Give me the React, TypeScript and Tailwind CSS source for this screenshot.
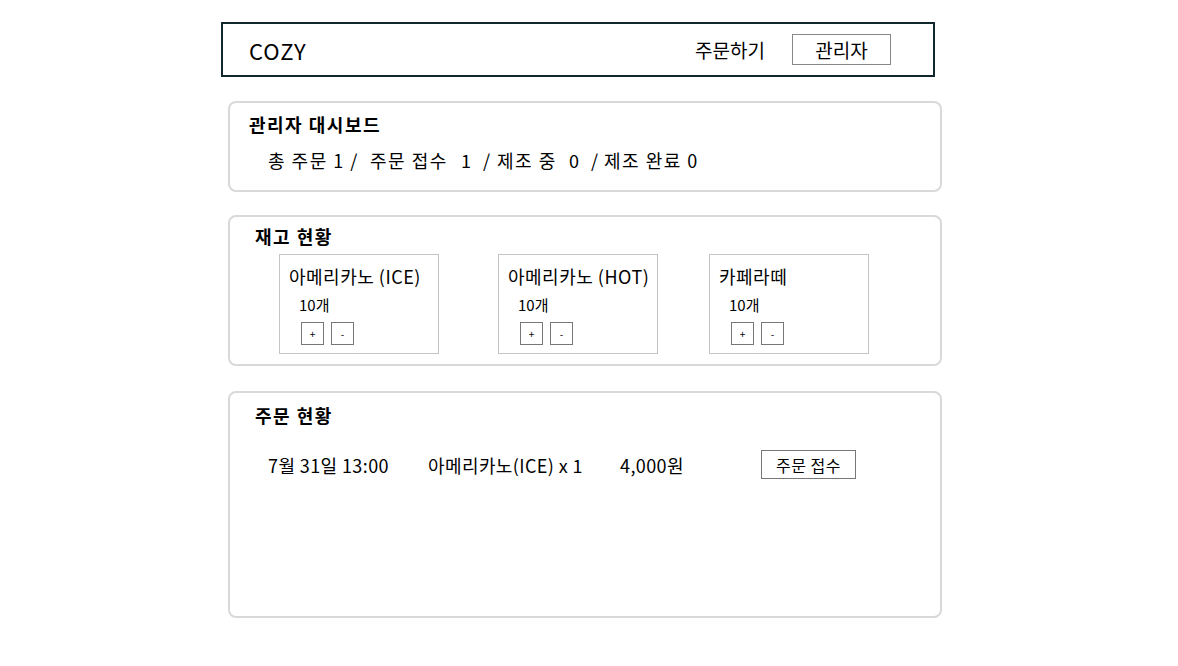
import React from "react";

const font = { fontFamily: '"Noto Sans CJK KR", "Noto Sans", sans-serif' };

const stock = [
  { name: "아메리카노 (ICE)", count: 10, cls: "ml-[24px]" },
  { name: "아메리카노 (HOT)", count: 10, cls: "ml-[59px]" },
  { name: "카페라떼", count: 10, cls: "ml-[51px]" },
];

// 대시보드 요약 줄: 조각별 폭을 고정해 간격을 맞춤
const summary = [
  { text: "총 주문 1 /", w: "w-[102px]" },
  { text: "주문 접수", w: "w-[91px]" },
  { text: "1", w: "w-[22px]" },
  { text: "/", w: "w-[14px]" },
  { text: "제조 중", w: "w-[72px]" },
  { text: "0", w: "w-[22px]" },
  { text: "/", w: "w-[13px]" },
  { text: "제조 완료 0", w: "" },
];

function Card({ className, children }: { className?: string; children: React.ReactNode }) {
  return (
    <section className={`ml-[7px] w-[714px] rounded-[8px] border-2 border-[#d9d9d9] bg-white ${className ?? ""}`}>
      {children}
    </section>
  );
}

export default function App() {
  return (
    <div className="min-h-[666px] bg-white text-black" style={font}>
      <div className="ml-[221px] flex w-[721px] flex-col pt-[22px]">
        <header className="flex h-[55px] w-[714px] items-center border-2 border-[#10272e] pl-[26px] pr-[42px]">
          <span className="text-[22px] leading-none tracking-[1px]">COZY</span>
          <span className="ml-auto text-[19px] leading-none">주문하기</span>
          <button className="ml-[27px] flex h-[31px] w-[99px] items-center justify-center border border-[#888] text-[19px] leading-none">
            관리자
          </button>
        </header>

        <Card className="mt-[24px] h-[91px] pl-[19px] pt-[10px]">
          <h2 className="text-[18px] font-bold leading-[22px] tracking-[1.5px]">관리자 대시보드</h2>
          <p className="ml-[19px] mt-[13px] flex whitespace-pre text-[18px] leading-[24px] tracking-[1.5px]">
            {summary.map((s, i) => (
              <span key={i} className={s.w}>
                {s.text}
              </span>
            ))}
          </p>
        </Card>

        <Card className="mt-[23px] h-[151px] pl-[25px] pt-[8px]">
          <h2 className="text-[18px] font-bold leading-[22px] tracking-[1.5px]">재고 현황</h2>
          <div className="mt-[7px] flex">
            {stock.map((s) => (
              <div key={s.name} className={`h-[100px] w-[160px] border border-[#c4c4c4] pl-[9px] pt-[9px] ${s.cls}`}>
                <div className="text-[18px] leading-[24px] tracking-[0.5px]">{s.name}</div>
                <div className="ml-[10px] mt-[7px] text-[15px] leading-[20px]">{s.count}개</div>
                <div className="ml-[12px] mt-[7px] flex gap-[7px]">
                  <button className="flex h-[23px] w-[23px] items-center justify-center border border-[#777] text-[10px] leading-none">
                    +
                  </button>
                  <button className="flex h-[23px] w-[23px] items-center justify-center border border-[#777] text-[10px] leading-none">
                    -
                  </button>
                </div>
              </div>
            ))}
          </div>
        </Card>

        <Card className="mt-[25px] h-[227px] pl-[25px] pt-[11px]">
          <h2 className="text-[18px] font-bold leading-[22px] tracking-[1.5px]">주문 현황</h2>
          <div className="mt-[24px] flex items-center text-[18px] leading-[24px] tracking-[0.4px]">
            <span className="ml-[13px] w-[160px]">7월 31일 13:00</span>
            <span className="w-[192px]">아메리카노(ICE) x 1</span>
            <span className="w-[141px]">4,000원</span>
            <button className="flex h-[29px] w-[95px] items-center justify-center border border-[#777] text-[16px] leading-none tracking-[0.5px]">
              주문 접수
            </button>
          </div>
        </Card>
      </div>
    </div>
  );
}
